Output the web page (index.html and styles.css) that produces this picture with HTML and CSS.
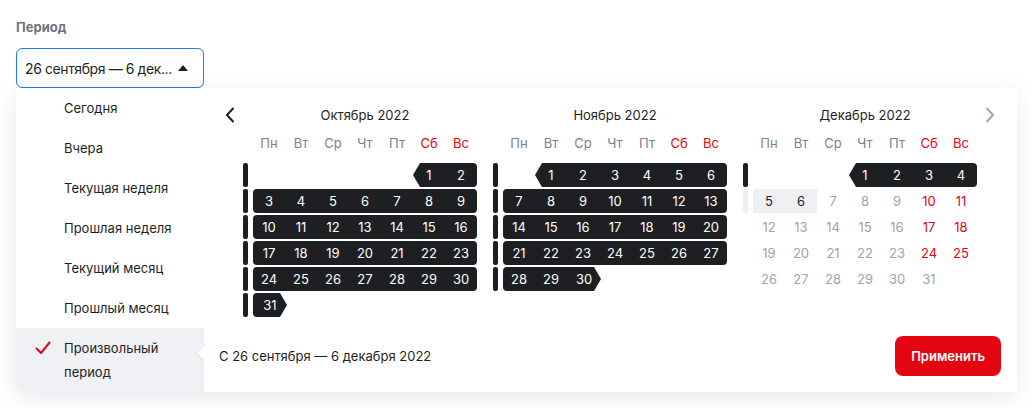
FILE: index.html
```html
<!DOCTYPE html>
<html lang="ru">
<head>
    <meta charset="UTF-8">
    <meta name="viewport" content="width=device-width, initial-scale=1.0">
    <title>Период</title>
    <link rel="stylesheet" href="styles.css">
</head>
<body>
    <div class="field">
        <div class="field-label">Период</div>
        <div class="select">
            <span class="select-value">26 сентября — 6 дек...</span>
            <span class="select-caret"></span>
        </div>
    </div>

    <div class="dropdown">
        <!-- Preset list -->
        <ul class="presets">
            <li>Сегодня</li>
            <li>Вчера</li>
            <li>Текущая неделя</li>
            <li>Прошлая неделя</li>
            <li>Текущий месяц</li>
            <li>Прошлый месяц</li>
            <li class="active">
                <svg class="check" width="16" height="14" viewBox="0 0 16 14">
                    <path d="M1.5 7.5 L6 12 L14.5 1.5" fill="none" stroke="#e30611" stroke-width="2" stroke-linecap="round" stroke-linejoin="round"/>
                </svg>
                Произвольный период
            </li>
        </ul>

        <!-- Calendar -->
        <div class="calendar">
            <div class="months" id="months">
                <button class="nav nav-prev">
                    <svg width="10" height="16" viewBox="0 0 10 16"><path d="M8 1.5 L2 8 L8 14.5" fill="none" stroke="#1e1f22" stroke-width="2" stroke-linecap="round" stroke-linejoin="round"/></svg>
                </button>
                <button class="nav nav-next">
                    <svg width="10" height="16" viewBox="0 0 10 16"><path d="M2 1.5 L8 8 L2 14.5" fill="none" stroke="#a3a7ae" stroke-width="2" stroke-linecap="round" stroke-linejoin="round"/></svg>
                </button>
            </div>
            <div class="footer">
                <span class="range-text">С 26 сентября — 6 декабря 2022</span>
                <button class="apply">Применить</button>
            </div>
        </div>
    </div>

    <script>
        // month list: offset of the 1st day (Mon = 0), number of days, last selected day
        const months = [
            { title: "Октябрь 2022", offset: 5, days: 31, selTo: 31, hover: [] },
            { title: "Ноябрь 2022", offset: 1, days: 30, selTo: 30, hover: [] },
            { title: "Декабрь 2022", offset: 3, days: 31, selTo: 4, hover: [5, 6] }
        ];
        const weekdays = ["Пн", "Вт", "Ср", "Чт", "Пт", "Сб", "Вс"];
        const container = document.getElementById("months");

        months.forEach((m, mi) => {
            const month = document.createElement("div");
            month.classList.add("month");

            const title = document.createElement("div");
            title.classList.add("month-title");
            title.textContent = m.title;
            month.appendChild(title);

            const head = document.createElement("div");
            head.classList.add("week", "week-head");
            head.innerHTML = '<span class="bar none"></span>';
            const headGrid = document.createElement("div");
            headGrid.classList.add("days");
            weekdays.forEach((w, i) => {
                const s = document.createElement("span");
                s.classList.add("wd");
                if (i > 4) s.classList.add("red");
                s.textContent = w;
                headGrid.appendChild(s);
            });
            head.appendChild(headGrid);
            month.appendChild(head);

            const rows = Math.ceil((m.offset + m.days) / 7);
            for (let r = 0; r < rows; r++) {
                const week = document.createElement("div");
                week.classList.add("week");
                const bar = document.createElement("span");
                bar.classList.add("bar");

                const grid = document.createElement("div");
                grid.classList.add("days");
                const cells = [];
                let hasSel = false, hasHover = false;

                for (let c = 0; c < 7; c++) {
                    const d = r * 7 + c - m.offset + 1;
                    const cell = document.createElement("span");
                    cell.classList.add("day");
                    if (d >= 1 && d <= m.days) {
                        cell.textContent = d;
                        if (d <= m.selTo) {
                            cell.classList.add("in");
                            hasSel = true;
                            if (d === 1) cell.classList.add("from");
                            if (d === m.selTo && mi < 2) cell.classList.add("to");
                        } else if (m.hover.includes(d)) {
                            cell.classList.add("hover");
                            hasHover = true;
                        } else if (c > 4 && d !== 31) {
                            cell.classList.add("red");
                        } else {
                            cell.classList.add("muted");
                        }
                    }
                    cells.push(cell);
                    grid.appendChild(cell);
                }

                // round the ends of the dark strip in each row
                const inCells = cells.filter(c => c.classList.contains("in"));
                if (inCells.length) {
                    const first = inCells[0], last = inCells[inCells.length - 1];
                    if (!first.classList.contains("from")) first.classList.add("row-start");
                    if (!last.classList.contains("to")) last.classList.add("row-end");
                }

                if (hasSel) bar.classList.add("dark");
                else if (hasHover) bar.classList.add("light");
                else bar.classList.add("none");

                week.appendChild(bar);
                week.appendChild(grid);
                month.appendChild(week);
            }
            container.appendChild(month);
        });
    </script>
</body>
</html>
```

FILE: styles.css
```css
* { box-sizing: border-box; }
body {
    margin: 0;
    padding: 16px;
    font-family: Inter, "Noto Sans", sans-serif;
    color: #1e1f22;
    background: #fff;
}

/* Field */
.field-label {
    font-size: 13px;
    font-weight: 700;
    color: #6e7480;
    line-height: 22px;
}
.select {
    margin-top: 10px;
    width: 188px;
    height: 40px;
    border: 1px solid #1a7cf0;
    border-radius: 6px;
    display: flex;
    align-items: center;
    justify-content: space-between;
    padding: 0 15px 0 8px;
    font-size: 14px;
}
.select-value {
    white-space: nowrap;
    letter-spacing: -0.4px;
}
.select-caret {
    width: 0; height: 0;
    border-left: 5px solid transparent;
    border-right: 5px solid transparent;
    border-bottom: 6px solid #1e1f22;
}

/* Dropdown */
.dropdown {
    display: flex;
    width: 1001px;
    background: #fff;
    border-radius: 0 0 8px 8px;
    box-shadow: 0 6px 24px rgba(30, 40, 60, 0.1);
}
.presets {
    list-style: none;
    margin: 0;
    padding: 0;
    width: 188px;
    flex-shrink: 0;
}
.presets li {
    font-size: 13px;
    line-height: 24px;
    padding: 8px 16px 8px 48px;
    position: relative;
}
.presets li.active {
    background: #f0f1f5;
    border-bottom-left-radius: 8px;
}
.check {
    position: absolute;
    left: 19px;
    top: 13px;
}

/* Calendar */
.calendar {
    flex: 1;
    display: flex;
    flex-direction: column;
    position: relative;
    background: #fff;
}
.calendar::before {
    content: "";
    position: absolute;
    left: -7px;
    top: 256px;
    width: 14px;
    height: 14px;
    background: #fff;
    border-left: 1px solid #dfe1e6;
    border-bottom: 1px solid #dfe1e6;
    transform: rotate(45deg) scaleX(0.7);
}
.months {
    display: flex;
    gap: 16px;
    padding: 16px 0 0 39px;
    position: relative;
}
.nav {
    position: absolute;
    top: 19px;
    background: none;
    border: none;
    padding: 0;
    cursor: pointer;
    line-height: 0;
}
.nav-prev { left: 21px; }
.nav-next { left: 781px; }

.month { width: 234px; }
.month-title {
    font-size: 13px;
    line-height: 22px;
    text-align: center;
    padding-left: 10px;
}
.week {
    display: flex;
    gap: 5px;
    margin-bottom: 2px;
}
.week-head { margin: 6px 0 9px; }
.bar {
    width: 5px;
    height: 24px;
    border-radius: 2px;
    flex-shrink: 0;
}
.bar.dark { background: #1e1f22; }
.bar.light { background: #eff0f3; }
.week-head .bar { height: 22px; }

.days {
    display: grid;
    grid-template-columns: repeat(7, 32px);
}
.wd {
    font-size: 13px;
    line-height: 22px;
    text-align: center;
    color: #7b818b;
}
.day {
    height: 24px;
    line-height: 24px;
    font-size: 13px;
    text-align: center;
}
.red { color: #e30611 !important; }
.muted { color: #9ea3ab; }
.day.in {
    background: #1e1f22;
    color: #fff;
}
.day.row-start { border-radius: 4px 0 0 4px; }
.day.row-end { border-radius: 0 4px 4px 0; }
.day.row-start.row-end { border-radius: 4px; }
.day.from {
    clip-path: polygon(7px 0, 100% 0, 100% 100%, 7px 100%, 0 50%);
}
.day.from.row-end { border-radius: 0 4px 4px 0; }
.day.to {
    clip-path: polygon(0 0, calc(100% - 7px) 0, 100% 50%, calc(100% - 7px) 100%, 0 100%);
    width: 34px;
}
.day.hover {
    background: #eff0f3;
    color: #1e1f22;
}

/* Footer */
.footer {
    margin-top: auto;
    display: flex;
    align-items: center;
    justify-content: space-between;
    padding: 0 16px 16px 15px;
}
.range-text { font-size: 13px; }
.apply {
    height: 40px;
    padding: 0 16px;
    border: none;
    border-radius: 8px;
    background: #e30611;
    color: #fff;
    font-family: inherit;
    font-size: 13px;
    font-weight: 600;
    cursor: pointer;
}
```
